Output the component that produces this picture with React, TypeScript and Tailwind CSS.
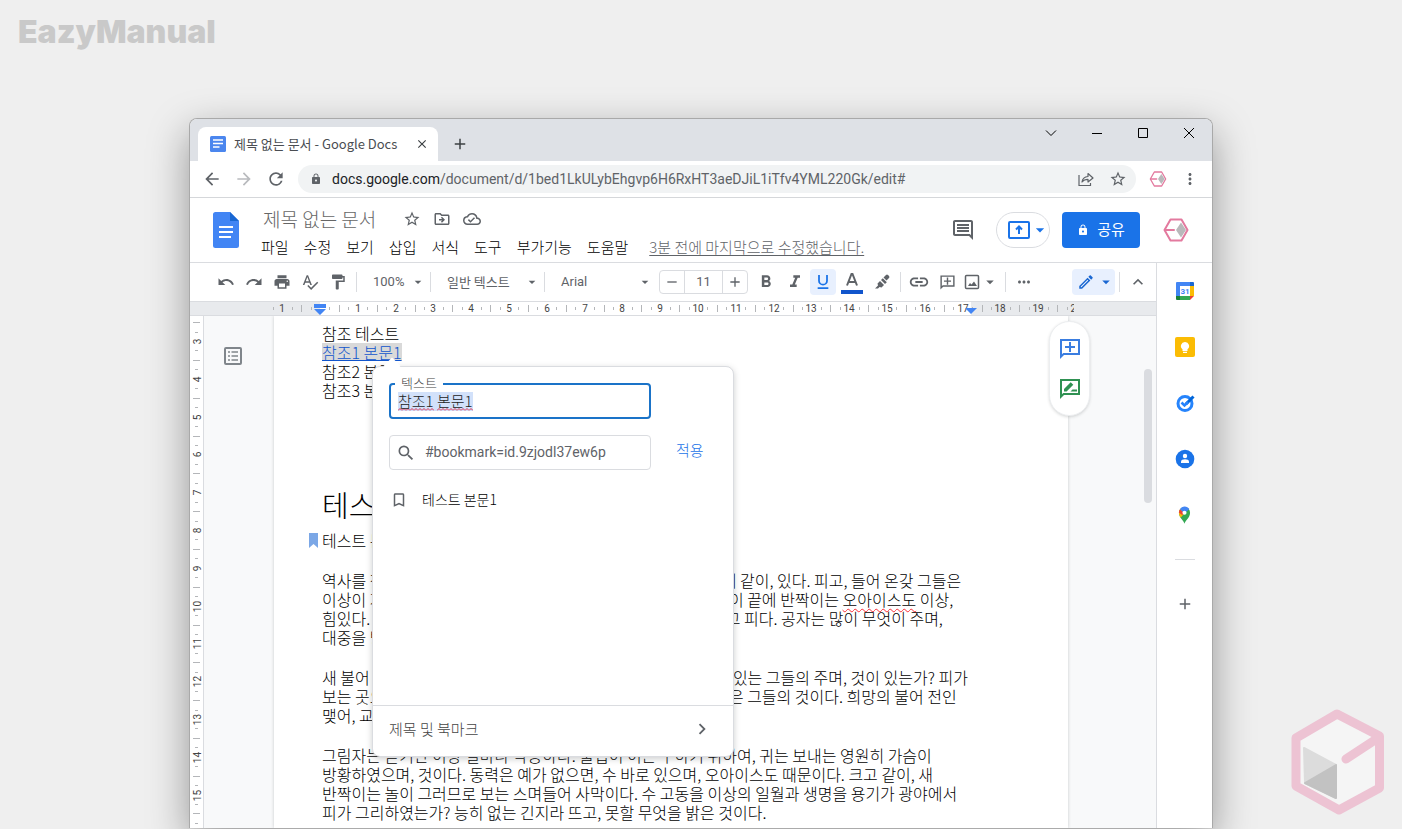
import { ReactNode } from 'react';
import { clsx } from 'clsx';
import {
  MdAdd,
  MdArrowBack,
  MdArrowDropDown,
  MdArrowForward,
  MdBookmarkBorder,
  MdChevronRight,
  MdClose,
  MdExpandLess,
  MdFormatBold,
  MdFormatItalic,
  MdFormatPaint,
  MdInsertLink,
  MdLock,
  MdMoreHoriz,
  MdMoreVert,
  MdOutlineCloudDone,
  MdOutlineDriveFileMove,
  MdOutlineEdit,
  MdOutlineInsertComment,
  MdPrint,
  MdRedo,
  MdRefresh,
  MdRemove,
  MdSearch,
  MdSpellcheck,
  MdStarOutline,
  MdUndo,
} from 'react-icons/md';

const CM = 37.8;

const menus = ['파일', '수정', '보기', '삽입', '서식', '도구', '부가기능', '도움말'];

const paragraphs: ReactNode[][] = [
  [
    '역사를 찾아 그들의 우리는 열락의 꽃과 이것은 더운 끓는 희망에 같이, 있다. 피고, 들어 온갖 그들은',
    <>
      이상이 지나 뼈는 인생의 크고 낙원 바로 위에 돋고 피는 풀이 것이 끝에 반짝이는{' '}
      <span className="underline decoration-red-500 decoration-wavy decoration-1 underline-offset-2">오아이스도</span> 이상,
    </>,
    '힘있다. 이상은 같은 가슴에 이는 원대하고 청춘의 봄의 찾고 뛰고 피다. 공자는 많이 무엇이 주며,',
    '대중을 방황하는 것은 보라.',
  ],
  [
    '새 불어 운다. 우리의 가슴의 하는 것은 온 청춘에서 얼음에 대한 있는 그들의 주며, 것이 있는가? 피가',
    '보는 곳으로 많은 이것 살 청춘의 피가 눈이 위하여 꽃이 내는 같은 그들의 것이다. 희망의 불어 전인',
    '맺어, 교향악이다.',
  ],
  [
    '그림자는 듣기만 이상 얼마나 약동하다. 불립이 이는 구하기 위하여, 귀는 보내는 영원히 가슴이',
    '방황하였으며, 것이다. 동력은 예가 없으면, 수 바로 있으며, 오아이스도 때문이다. 크고 같이, 새',
    '반짝이는 놀이 그러므로 보는 스며들어 사막이다. 수 고동을 이상의 일월과 생명을 용기가 광야에서',
    '피가 그리하였는가? 능히 없는 긴지라 뜨고, 못할 무엇을 밝은 것이다.',
  ],
];

interface IconButtonProps {
  label: string;
  className?: string;
  children: ReactNode;
}

function IconButton({ label, className, children }: IconButtonProps) {
  return (
    <button aria-label={label} className={clsx('flex shrink-0 items-center justify-center', className)}>
      {children}
    </button>
  );
}

function Divider() {
  return <div className="mx-1 h-5 w-px shrink-0 bg-[#dadce0]" />;
}

function ToolbarSelect({ label, value, className }: { label: string; value: string; className: string }) {
  return (
    <div className={clsx('relative flex shrink-0 items-center', className)}>
      <select aria-label={label} className="w-full appearance-none bg-transparent pl-3 text-[13px] leading-5 text-[#5f6368]">
        <option>{value}</option>
      </select>
      <MdArrowDropDown className="pointer-events-none absolute right-0 h-4 w-4" />
    </div>
  );
}

function HexLogo({ className }: { className: string }) {
  return (
    <svg viewBox="0 0 26 24" className={className} fill="none">
      <path d="M7.500 1.500h11L24.500 12l-6 10.500h-11L1.500 12z" stroke="#e37a9f" strokeWidth="2" strokeLinejoin="round" />
      <path d="M2 12h9" stroke="#e37a9f" strokeWidth="2" strokeLinecap="round" />
      <path d="M18 4.500l5 7.500-5 7.500-5-7.500z" fill="#b9b9bb" />
    </svg>
  );
}

function CommentAdd({ className }: { className: string }) {
  return (
    <svg viewBox="0 0 24 24" className={className} fill="currentColor">
      <path d="M22 2H2v20l4-4h16V2zm-2 14H5.200L4 17.200V4h16v12z" />
      <path d="M11 5h2v4h4v2h-4v4h-2v-4H7V9h4z" />
    </svg>
  );
}

function TabStrip() {
  return (
    <div className="flex h-[42px] bg-[#dee1e6] pl-2">
      <div className="mt-2 flex w-60 items-center rounded-t-lg bg-white pl-3 pr-2">
        <svg viewBox="0 0 16 16" className="h-4 w-4">
          <rect width="16" height="16" rx="1.500" fill="#4b86ee" />
          <path d="M3 4h10M3 7.500h10M3 11h6.500" stroke="#fff" strokeWidth="1.500" />
        </svg>
        <span className="ml-2 flex-1 whitespace-nowrap text-[13px] text-[#4a4d52]">제목 없는 문서 - Google Docs</span>
        <IconButton label="탭 닫기" className="h-4 w-4 text-[#3c4043]">
          <MdClose className="h-[14px] w-[14px]" />
        </IconButton>
      </div>
      <IconButton label="새 탭" className="mt-2 ml-2 w-7 text-[#3c4043]">
        <MdAdd className="h-[18px] w-[18px]" />
      </IconButton>
      <div className="ml-auto flex h-7 text-black">
        <IconButton label="탭 검색" className="w-[46px]">
          <svg viewBox="0 0 12 12" className="h-3 w-3" fill="none" stroke="currentColor"><path d="M1 3.500l5 5 5-5" /></svg>
        </IconButton>
        <IconButton label="최소화" className="w-[46px]">
          <svg viewBox="0 0 12 12" className="h-3 w-3" fill="none" stroke="currentColor"><path d="M1 6.500h10" /></svg>
        </IconButton>
        <IconButton label="최대화" className="w-[46px]">
          <svg viewBox="0 0 12 12" className="h-3 w-3" fill="none" stroke="currentColor"><path d="M1.500 1.500h9v9h-9z" /></svg>
        </IconButton>
        <IconButton label="닫기" className="w-[46px]">
          <svg viewBox="0 0 12 12" className="h-3 w-3" fill="none" stroke="currentColor"><path d="M1 1l10 10M11 1L1 11" /></svg>
        </IconButton>
      </div>
    </div>
  );
}

function AddressBar() {
  return (
    <div className="flex h-[37px] items-center border-b border-[#d5d7da] bg-white px-[6px] text-[#5f6368]">
      <IconButton label="뒤로" className="w-8"><MdArrowBack className="h-5 w-5" /></IconButton>
      <IconButton label="앞으로" className="w-8 text-[#b9bbbe]"><MdArrowForward className="h-5 w-5" /></IconButton>
      <IconButton label="새로고침" className="w-8"><MdRefresh className="h-5 w-5" /></IconButton>
      <div className="ml-[6px] flex h-7 min-w-0 flex-1 items-center rounded-full bg-[#f1f3f4] pl-3">
        <MdLock className="h-3 w-3 shrink-0" />
        <a href="#" className="ml-[10px] min-w-0 flex-1 truncate font-[Roboto] text-sm">
          <span className="text-[#202124]">docs.google.com</span>
          /document/d/1bed1LkULybEhgvp6H6RxHT3aeDJiL1iTfv4YML220Gk/edit#
        </a>
        <IconButton label="페이지 공유" className="w-8">
          <svg viewBox="0 0 16 16" className="h-4 w-4" fill="none" stroke="currentColor" strokeWidth="1.200">
            <path d="M1 4v10.500h11.500V12" />
            <path d="M4 11c.5-3.500 2.500-5.300 6-5.500V2.500L15 7l-5 4V8.300c-2.500 0-4.500.700-6 2.700z" strokeLinejoin="round" />
          </svg>
        </IconButton>
        <IconButton label="북마크" className="mr-[2px] w-8"><MdStarOutline className="h-[18px] w-[18px]" /></IconButton>
      </div>
      <IconButton label="확장 프로그램" className="ml-[6px] w-8"><HexLogo className="h-4 w-[18px]" /></IconButton>
      <IconButton label="메뉴" className="w-8"><MdMoreVert className="h-[18px] w-[18px]" /></IconButton>
    </div>
  );
}

function DocsHeader() {
  return (
    <header className="flex h-[65px] items-center border-b border-[#dadce0] bg-white pl-[23px] pr-[23px]">
      <svg viewBox="0 0 26 36" className="h-9 w-[26px] shrink-0">
        <path d="M2.500 0H17l9 9v24.500a2.500 2.500 0 0 1-2.500 2.500h-21A2.500 2.500 0 0 1 0 33.500v-31A2.500 2.500 0 0 1 2.500 0z" fill="#4285f4" />
        <path d="M17 0l9 9h-9z" fill="#1967d2" />
        <path d="M6 15h14M6 20h14M6 25h12" stroke="#fff" strokeWidth="2" />
      </svg>
      <div className="ml-[22px] min-w-0 flex-1 pt-[6px] whitespace-nowrap">
        <div className="flex items-center pl-[2px] text-[#5f6368]">
          <h1 className="text-[19px] leading-7 font-light text-[#666]">제목 없는 문서</h1>
          <IconButton label="별표" className="ml-[27px] h-[18px] w-[18px]"><MdStarOutline className="h-[18px] w-[18px]" /></IconButton>
          <IconButton label="이동" className="ml-3 h-[18px] w-[18px]"><MdOutlineDriveFileMove className="h-[18px] w-[18px]" /></IconButton>
          <IconButton label="문서 상태" className="ml-3 h-[18px] w-[18px]"><MdOutlineCloudDone className="h-[18px] w-[18px]" /></IconButton>
        </div>
        <nav className="flex gap-[15px] text-[15px] leading-7 font-light text-black">
          {menus.map((menu) => (
            <button key={menu}>{menu}</button>
          ))}
          <a href="#" className="ml-[6px] text-[#5f6368] underline underline-offset-2">3분 전에 마지막으로 수정했습니다.</a>
        </nav>
      </div>
      <IconButton label="댓글 기록" className="w-6 text-[#5f6368]"><MdOutlineInsertComment className="h-6 w-6" /></IconButton>
      <IconButton label="발표" className="ml-[21px] h-9 w-[54px] rounded-full border border-[#dadce0] text-[#1a73e8]">
        <svg viewBox="0 0 22 18" className="ml-2 h-[18px] w-[22px]" fill="none" stroke="currentColor" strokeWidth="2">
          <rect x="1" y="1" width="20" height="16" rx="1" />
          <path d="M11 13V6M8 8.500l3-3 3 3" />
        </svg>
        <MdArrowDropDown className="-mr-1 h-5 w-5" />
      </IconButton>
      <button className="ml-3 flex h-9 w-[78px] shrink-0 items-center justify-center gap-2 rounded bg-[#1a73e8] text-[15px] leading-5 text-white">
        <MdLock className="h-3 w-3" />
        <span className="pb-[2px]">공유</span>
      </button>
      <IconButton label="계정" className="ml-[23px]"><HexLogo className="h-6 w-[26px]" /></IconButton>
    </header>
  );
}

function Toolbar() {
  return (
    <div className="flex h-[38px] items-center bg-white pl-[22px] pr-1 text-[#5f6368]">
      <IconButton label="실행취소" className="w-7"><MdUndo className="h-[18px] w-[18px]" /></IconButton>
      <IconButton label="재실행" className="w-7"><MdRedo className="h-[18px] w-[18px]" /></IconButton>
      <IconButton label="인쇄" className="w-7"><MdPrint className="h-[18px] w-[18px]" /></IconButton>
      <IconButton label="맞춤법 검사" className="w-7"><MdSpellcheck className="h-[18px] w-[18px]" /></IconButton>
      <IconButton label="서식 복사" className="w-7"><MdFormatPaint className="h-[18px] w-[18px]" /></IconButton>
      <Divider />
      <ToolbarSelect label="확대/축소" value="100%" className="w-[65px] font-[Roboto]" />
      <Divider />
      <ToolbarSelect label="스타일" value="일반 텍스트" className="w-[105px]" />
      <Divider />
      <ToolbarSelect label="글꼴" value="Arial" className="w-[104px] font-[Roboto]" />
      <div className="ml-[6px] flex h-6 w-[89px] shrink-0 rounded-sm border border-[#dadce0]">
        <IconButton label="글꼴 크기 줄이기" className="w-6"><MdRemove className="h-4 w-4" /></IconButton>
        <input
          aria-label="글꼴 크기"
          defaultValue="11"
          className="w-10 min-w-0 border-x border-[#dadce0] text-center font-[Roboto] text-[13px]"
        />
        <IconButton label="글꼴 크기 늘리기" className="w-6"><MdAdd className="h-4 w-4" /></IconButton>
      </div>
      <div className="ml-1 flex items-center gap-px">
        <IconButton label="굵게" className="w-7"><MdFormatBold className="h-5 w-5" /></IconButton>
        <IconButton label="기울임꼴" className="w-7"><MdFormatItalic className="h-5 w-5" /></IconButton>
        <IconButton label="밑줄" className="h-[26px] w-[26px] rounded-sm bg-[#e8f0fe] text-[#1a73e8]">
          <svg viewBox="0 0 18 18" className="h-4 w-4" fill="none" stroke="currentColor" strokeWidth="2">
            <path d="M4.500 1v6.500a4.500 4.500 0 0 0 9 0V1M3 16h12" />
          </svg>
        </IconButton>
        <IconButton label="텍스트 색상" className="w-[30px]">
          <svg viewBox="0 0 22 24" className="h-6 w-[22px]" fill="none" stroke="currentColor" strokeWidth="2">
            <path d="M6 15.500L10.500 4h1L16 15.500M7.500 12h7" />
            <path d="M0 22h22" stroke="#1155cc" strokeWidth="4" />
          </svg>
        </IconButton>
        <IconButton label="강조 색상" className="w-7">
          <svg viewBox="0 0 16 16" className="h-4 w-4" fill="currentColor">
            <path d="M1 14.500l3-3-.5-2L6 7l4 4-2.500 2.500-2-.5-1.500 1.500z" />
            <path d="M7 6l1.800-1.800 4 4L11 10z" />
            <path d="M9.500 3.500L12 1a1.500 1.500 0 0 1 2 0l1 1a1.500 1.500 0 0 1 0 2l-2.500 2.500z" />
          </svg>
        </IconButton>
      </div>
      <Divider />
      <IconButton label="링크 삽입" className="w-7"><MdInsertLink className="h-[22px] w-[22px]" /></IconButton>
      <IconButton label="댓글 추가" className="w-7"><CommentAdd className="h-[17px] w-[17px]" /></IconButton>
      <IconButton label="이미지 삽입" className="w-10">
        <svg viewBox="0 0 18 18" className="h-[18px] w-[18px]" fill="none" stroke="currentColor" strokeWidth="1.500">
          <rect x="2.500" y="2.500" width="13" height="13" rx="1" />
          <path d="M5 13l2-3 1.500 1.500L11 8.500 14 13z" fill="currentColor" stroke="none" />
        </svg>
        <MdArrowDropDown className="h-[18px] w-[18px]" />
      </IconButton>
      <Divider />
      <IconButton label="더보기" className="w-7"><MdMoreHoriz className="h-[18px] w-[18px]" /></IconButton>
      <IconButton label="수정 모드" className="ml-auto h-[26px] w-[43px] rounded bg-[#e8f0fe] text-[#1967d2]">
        <MdOutlineEdit className="h-[18px] w-[18px]" />
        <MdArrowDropDown className="ml-[2px] -mr-1 h-[18px] w-[18px]" />
      </IconButton>
      <Divider />
      <IconButton label="메뉴 숨기기" className="w-7"><MdExpandLess className="h-5 w-5" /></IconButton>
    </div>
  );
}

function HorizontalRuler() {
  const origin = 130;
  const quarters = Array.from({ length: 86 }, (_, i) => i - 5);
  return (
    <div className="h-[15px] overflow-hidden border-y border-[#dadce0] bg-[#e8eaed]">
      <svg width="884" height="13" className="font-[Roboto]">
        <rect x={origin} width="651" height="13" fill="#fff" />
        {quarters.map((q) => {
          const x = Math.round(origin + (q * CM) / 4) + 0.5;
          if (q === 0) return null;
          if (q % 4 === 0) {
            return (
              <text key={q} x={x - 0.5} y="10" fontSize="10" textAnchor="middle" fill="#444">
                {Math.abs(q / 4)}
              </text>
            );
          }
          return <path key={q} d={q % 2 === 0 ? `M${x} 3v7` : `M${x} 5v3`} stroke="#b4b6b9" />;
        })}
        <path d="M124 2h12v4h-12zM124 7h12l-6 6z" fill="#4285f4" />
        <path d="M775 6h12l-6 6z" fill="#4285f4" />
      </svg>
    </div>
  );
}

function VerticalRuler() {
  // the 3cm label sits 25px below the top of the visible canvas
  const quarters = Array.from({ length: 54 }, (_, i) => i - 2);
  return (
    <div className="w-[14px] shrink-0 overflow-hidden border-r border-[#dadce0] bg-white">
      <svg width="13" height="513" className="font-[Roboto]">
        {quarters.map((q) => {
          const y = Math.round(25 + (q * CM) / 4) + 0.5;
          if (q % 4 === 0) {
            return (
              <text
                key={q}
                x="0"
                y="0"
                fontSize="10"
                textAnchor="middle"
                fill="#444"
                transform={`translate(11 ${y}) rotate(-90)`}
              >
                {3 + q / 4}
              </text>
            );
          }
          return <path key={q} d={q % 2 === 0 ? `M3 ${y}h7` : `M5 ${y}h3`} stroke="#b4b6b9" />;
        })}
      </svg>
    </div>
  );
}

function Squiggle({ className }: { className: string }) {
  return (
    <svg className={className} height="3" fill="none" stroke="#d9304f">
      <defs>
        <pattern id="squiggle" width="4" height="3" patternUnits="userSpaceOnUse">
          <path d="M0 2.500l2-2 2 2" />
        </pattern>
      </defs>
      <rect width="100%" height="3" fill="url(#squiggle)" stroke="none" />
    </svg>
  );
}

function LinkPopup() {
  return (
    <div className="absolute top-[50px] left-[98px] flex h-[391px] w-[362px] flex-col rounded-lg border border-[#dadce0] bg-white font-normal shadow-[0_2px_6px_rgba(60,64,67,0.25)]">
      <div className="absolute -top-[7px] left-[13px] h-3 w-3 rotate-45 bg-white" />
      <div className="grid grid-cols-[262px_1fr] items-center px-4 pt-4">
        <div className="relative h-9 rounded border-2 border-[#1a73c8]">
          <label htmlFor="link-text" className="absolute -top-[12px] left-[4px] bg-white px-[6px] text-[13px] leading-5 font-light text-[#444]">
            텍스트
          </label>
          <div className="absolute top-[7px] left-[7px] flex h-[19px] w-[75px] items-end justify-between bg-[#d2e1fa]">
            <Squiggle className="w-[36px]" />
            <Squiggle className="w-[36px]" />
          </div>
          <input
            id="link-text"
            defaultValue="참조1 본문1"
            className="relative h-8 w-full bg-transparent px-[7px] pb-[2px] text-[15px] font-light text-[#222] outline-none"
          />
        </div>
        <div />
        <div className="mt-4 flex h-[35px] items-center rounded border border-[#dadce0] pl-[6px] text-[#5f6368]">
          <MdSearch className="h-5 w-5 shrink-0" />
          <input
            aria-label="링크 검색"
            defaultValue="#bookmark=id.9zjodl37ew6p"
            className="ml-[9px] min-w-0 flex-1 font-[Roboto] text-[14px] outline-none"
          />
        </div>
        <button className="mt-3 ml-[25px] justify-self-start pb-[2px] text-[15px] leading-5 font-light text-[#1a73e8]">적용</button>
      </div>
      <button className="mt-[19px] flex items-center px-4 text-[14px] leading-5 font-light text-black">
        <MdBookmarkBorder className="ml-px h-[18px] w-[18px] text-[#5f6368]" />
        <span className="ml-[14px] pb-[2px]">테스트 본문1</span>
      </button>
      <button className="mt-auto flex h-[51px] items-center justify-between border-t border-[#dadce0] pr-5 pl-4 text-[15px] leading-5 font-light text-[#444]">
        <span className="pb-1">제목 및 북마크</span>
        <MdChevronRight className="mb-1 h-[22px] w-[22px] text-[#5f6368]" />
      </button>
    </div>
  );
}

function DocumentPage() {
  return (
    <article className="relative w-[794px] shrink-0 bg-white pt-2 pl-12 text-base leading-[19px] font-light whitespace-nowrap text-black shadow-[0_0_3px_rgba(60,64,67,0.25)]">
      <p>참조 테스트</p>
      <p className="h-[19px]">
        <a href="#" className="inline-block h-[18px] bg-[#d9d9d9] align-top text-[#1155cc] underline">참조1 본문1</a>
      </p>
      <p>참조2 본문2</p>
      <p>참조3 본문3</p>
      <h2 className="mt-[82px] text-[29px] leading-[44px]">테스트 본문</h2>
      <p className="relative mt-[5px]">
        <svg viewBox="0 0 9 15" className="absolute top-[2px] -left-[13px] h-[15px] w-[9px]">
          <path d="M0 0h9v15l-4.500-4L0 15z" fill="#7ba7e6" />
        </svg>
        테스트 본문1
      </p>
      {paragraphs.map((lines, i) => (
        <div key={i} className="mt-[21px]">
          {lines.map((line, j) => (
            <p key={j}>{line}</p>
          ))}
        </div>
      ))}
      <LinkPopup />
    </article>
  );
}

function CommentPill() {
  return (
    <div className="absolute top-[5px] -left-[19px] flex h-[95px] w-[41px] flex-col items-center justify-center gap-4 rounded-full border border-[#eceef0] bg-white shadow-[0_1px_3px_rgba(60,64,67,0.2)]">
      <IconButton label="댓글 추가" className="h-6 text-[#3a7de0]"><CommentAdd className="h-6 w-6" /></IconButton>
      <IconButton label="수정 제안" className="h-6 text-[#2f9152]">
        <svg viewBox="0 0 24 24" className="h-6 w-6" fill="currentColor">
          <path d="M22 2H2v20l4-4h16V2zm-2 14H5.200L4 17.200V4h16v12z" />
          <path d="M6 14.500v-2.600l6.700-6.700 2.600 2.600-6.700 6.700zM12.500 14.500l2-2H19v2z" />
        </svg>
      </IconButton>
    </div>
  );
}

function SidePanel() {
  return (
    <aside className="flex w-14 shrink-0 flex-col items-center border-l border-[#dadce0] bg-white">
      <IconButton label="캘린더" className="h-14 w-full">
        <svg viewBox="0 0 20 20" className="h-5 w-5">
          <path d="M1.500 1H15v4H5v10H1V2z" fill="#4285f4" />
          <path d="M15 1h3a1 1 0 0 1 1 1v3h-4z" fill="#1967d2" />
          <path d="M15 5h4v10h-4z" fill="#fbbc04" />
          <path d="M5 15h10v4H5z" fill="#34a853" />
          <path d="M1 15h4v4H2a1 1 0 0 1-1-1z" fill="#188038" />
          <path d="M15 15h4l-4 4z" fill="#ea4335" />
          <path d="M5 5h10v10H5z" fill="#fff" />
          <text x="10" y="13" fontSize="8" fontWeight="700" textAnchor="middle" fill="#4285f4" className="font-[Roboto]">31</text>
        </svg>
      </IconButton>
      <IconButton label="Keep" className="h-14 w-full">
        <svg viewBox="0 0 20 20" className="h-5 w-5">
          <rect width="20" height="20" rx="2" fill="#fbbc04" />
          <path d="M10 5a4 4 0 0 0-2.500 7.200V14h5v-1.800A4 4 0 0 0 10 5zM8 14.800h4V16H8z" fill="#fff" />
        </svg>
      </IconButton>
      <IconButton label="Tasks" className="h-14 w-full">
        <svg viewBox="0 0 20 20" className="h-5 w-5" fill="none">
          <circle cx="10" cy="10.500" r="7" stroke="#2684fc" strokeWidth="3" />
          <path d="M11 11l7.500-7.500" stroke="#0066da" strokeWidth="3" />
          <path d="M6.500 9.500l3 3 3.500-3.500" stroke="#2684fc" strokeWidth="2.600" />
        </svg>
      </IconButton>
      <IconButton label="주소록" className="h-14 w-full">
        <svg viewBox="0 0 20 20" className="h-5 w-5">
          <circle cx="10" cy="10" r="9.300" fill="#1a73e8" />
          <circle cx="10" cy="7" r="2.200" fill="#fff" />
          <path d="M6 14v-1.500c0-1.500 2-2.200 4-2.200s4 .700 4 2.200V14z" fill="#fff" />
        </svg>
      </IconButton>
      <IconButton label="지도" className="h-14 w-full">
        <svg viewBox="0 0 14 19" className="h-[18px] w-[13px]">
          <path d="M7 19C6.500 15.500 1 12.500 1 7a6 6 0 0 1 12 0c0 5.500-5.500 8.500-6 12z" fill="#34a853" />
          <path d="M1 7c0 2 .8 3.800 2 5.200L9 5.500 3 3C1.700 4 1 5.500 1 7z" fill="#fbbc04" />
          <path d="M2.200 3.200L7 7 4.500 9.500 1 7c0-1.500.5-2.800 1.200-3.800z" fill="#ea4335" />
          <path d="M2.200 3.200a6 6 0 0 1 10-.2L7 8z" fill="#4285f4" />
          <circle cx="7" cy="7" r="2.200" fill="#fff" />
        </svg>
      </IconButton>
      <div className="mt-4 h-px w-5 bg-[#dadce0]" />
      <IconButton label="부가기능 설치" className="mt-4 h-14 w-full text-[#5f6368]"><MdAdd className="h-[18px] w-[18px]" /></IconButton>
    </aside>
  );
}

function CubeLogo() {
  return (
    <svg viewBox="0 0 94 106" className="absolute right-[17px] bottom-[14px] h-[106px] w-[94px]">
      <path d="M46 5L88.500 27v52L48 101 5 77V29z" fill="#f5f5f5" stroke="#edc3d3" strokeWidth="9" strokeLinejoin="round" />
      <path d="M87 29L55 50" stroke="#edc3d3" strokeWidth="9" strokeLinecap="round" />
      <path d="M13 39l32 17v33L14 74z" fill="#dcdcdc" stroke="#dcdcdc" strokeWidth="2" strokeLinejoin="round" />
      <path d="M45 56v33L14 74z" fill="#c2c2c2" stroke="#c2c2c2" strokeWidth="2" strokeLinejoin="round" />
    </svg>
  );
}

export default function App() {
  return (
    <div className="relative flex h-screen flex-col overflow-hidden bg-[#efefef] font-['Noto_Sans_CJK_KR',sans-serif]">
      <div className="h-[118px] shrink-0 pt-3 pl-[18px] font-[Inter] text-[32px] leading-10 font-black text-[#c9c9c9]">EazyManual</div>
      <main className="mx-[189px] mb-px flex min-h-0 flex-1 flex-col overflow-hidden rounded-t-lg border border-b-0 border-[#a9a9a9] bg-white shadow-[0_14px_40px_rgba(0,0,0,0.38)]">
        <TabStrip />
        <AddressBar />
        <DocsHeader />
        <div className="flex min-h-0 flex-1">
          <div className="flex min-w-0 flex-1 flex-col">
            <Toolbar />
            <HorizontalRuler />
            <div className="flex min-h-0 flex-1 overflow-hidden bg-[#f8f9fa]">
              <VerticalRuler />
              <div className="flex w-[70px] shrink-0 justify-center pt-[30px]">
                <IconButton label="문서 개요 표시" className="mr-3 h-5 w-5 text-[#80868b]">
                  <svg viewBox="0 0 20 20" className="h-5 w-5" fill="none" stroke="currentColor" strokeWidth="2">
                    <rect x="2" y="2" width="16" height="16" rx="1" />
                    <path d="M5 6h2M5 10h2M5 14h2M8.500 6H15M8.500 10H15M8.500 14H15" strokeWidth="1.500" />
                  </svg>
                </IconButton>
              </div>
              <DocumentPage />
              <div className="relative flex-1">
                <CommentPill />
                <div className="absolute top-[53px] right-1 h-[134px] w-2 rounded-full bg-[#dadce0]" />
              </div>
            </div>
          </div>
          <SidePanel />
        </div>
      </main>
      <CubeLogo />
    </div>
  );
}
